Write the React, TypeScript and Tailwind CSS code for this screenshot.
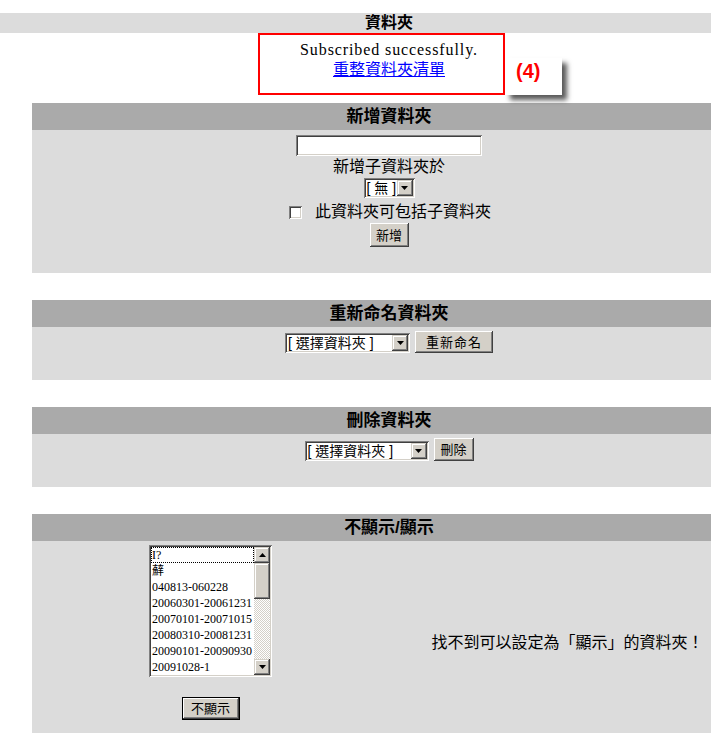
import type { ReactNode } from "react";

const raised =
  "bg-[#d4d0c8] shadow-[inset_-1px_-1px_0_#404040,inset_1px_1px_0_#ffffff,inset_-2px_-2px_0_#808080]";
const sunken =
  "bg-white shadow-[inset_1px_1px_0_#808080,inset_-1px_-1px_0_#ffffff,inset_2px_2px_0_#404040,inset_-2px_-2px_0_#d4d0c8]";
const scrollPart =
  "bg-[#d4d0c8] shadow-[inset_-1px_-1px_0_#404040,inset_1px_1px_0_#d4d0c8,inset_-2px_-2px_0_#808080,inset_2px_2px_0_#ffffff]";

const folders = [
  "I?",
  "蘚",
  "040813-060228",
  "20060301-20061231",
  "20070101-20071015",
  "20080310-20081231",
  "20090101-20090930",
  "20091028-1",
];

function Arrow({ up }: { up?: boolean }) {
  return (
    <svg width="7" height="4" viewBox="0 0 7 4" aria-hidden="true">
      <path d={up ? "M3.5 0 L7 4 L0 4 Z" : "M0 0 L7 0 L3.5 4 Z"} fill="#000" />
    </svg>
  );
}

function ArrowButton({ up }: { up?: boolean }) {
  return (
    <span className={`flex h-[16px] w-[16px] shrink-0 items-center justify-center ${scrollPart}`}>
      <Arrow up={up} />
    </span>
  );
}

function Dropdown({ label, className }: { label: string; className: string }) {
  return (
    <div className={`flex h-[20px] items-center p-[2px] ${sunken} ${className}`}>
      <span className="flex-1 truncate pl-[1px] text-[14px] leading-[16px]">{label}</span>
      <ArrowButton />
    </div>
  );
}

function Button({ children, className }: { children: ReactNode; className: string }) {
  return (
    <button
      type="button"
      className={`flex items-center justify-center text-[13px] leading-none ${raised} ${className}`}
    >
      {children}
    </button>
  );
}

function Section({ title, children, bodyClass }: { title: string; children: ReactNode; bodyClass: string }) {
  return (
    <section>
      <h2 className="flex h-[27px] items-center justify-center bg-[#aaaaaa] text-[17px] font-bold leading-none">
        {title}
      </h2>
      <div className={`bg-[#dcdcdc] ${bodyClass}`}>{children}</div>
    </section>
  );
}

function ListBox() {
  return (
    <div className={`flex h-[132px] w-[123px] p-[2px] ${sunken}`}>
      <ul className="min-w-0 flex-1 overflow-hidden font-['Liberation_Serif','Noto_Sans_CJK_TC',serif] text-[12px]">
        {folders.map((name, i) => (
          <li
            key={name}
            className={`h-[16px] overflow-hidden whitespace-nowrap leading-[14px] ${
              i === 0 ? "border border-dotted border-black" : "border border-transparent"
            }`}
          >
            {name}
          </li>
        ))}
      </ul>
      <div className="flex w-[16px] shrink-0 flex-col">
        <ArrowButton up />
        <span className={`h-[36px] ${scrollPart}`} />
        <span className="flex-1 bg-[repeating-conic-gradient(#d4d0c8_0%_25%,#ffffff_0%_50%)] bg-[length:2px_2px]" />
        <ArrowButton />
      </div>
    </div>
  );
}

export default function App() {
  return (
    <div className="relative h-[733px] w-full overflow-hidden bg-white font-['Liberation_Sans','Noto_Sans_CJK_TC',sans-serif] text-black">
      <div className="w-[778px] pt-[13px]">
        <div className="flex h-[20px] items-center justify-center bg-[#dcdcdc] text-[16px] font-bold leading-none">
          資料夾
        </div>

        <div className="flex h-[70px] flex-col items-center pt-[7px]">
          <p className="h-[20px] font-['Liberation_Serif',serif] text-[16px] leading-[20px] tracking-[0.9px]">
            Subscribed successfully.
          </p>
          <a href="#" className="h-[20px] text-[16px] leading-[20px] text-[#0000ff] underline">
            重整資料夾清單
          </a>
        </div>

        <div className="ml-[32px] flex w-[714px] flex-col gap-[27px]">
          <Section title="新增資料夾" bodyClass="flex h-[143px] flex-col items-center pt-[5px]">
            <div className={`h-[21px] w-[186px] ${sunken}`} />
            <div className="flex h-[22px] items-center text-[16px] leading-none">新增子資料夾於</div>
            <Dropdown label="[ 無 ]" className="w-[51px]" />
            <div className="mt-[3px] flex h-[22px] items-center gap-[13px] pl-[2px] text-[16px] leading-none">
              <span className={`h-[13px] w-[13px] ${sunken}`} />
              <span>此資料夾可包括子資料夾</span>
            </div>
            <Button className="h-[24px] w-[39px]">新增</Button>
          </Section>

          <Section title="重新命名資料夾" bodyClass="flex h-[53px] items-start justify-center pt-[4px]">
            <div className="flex items-end gap-[5px]">
              <Dropdown label="[ 選擇資料夾 ]" className="w-[125px]" />
              <Button className="h-[22px] w-[78px] tracking-[1px]">重新命名</Button>
            </div>
          </Section>

          <Section title="刪除資料夾" bodyClass="flex h-[53px] items-start justify-center pt-[4px]">
            <div className="flex items-end gap-[5px]">
              <Dropdown label="[ 選擇資料夾 ]" className="w-[124px]" />
              <Button className="h-[23px] w-[40px]">刪除</Button>
            </div>
          </Section>

          <Section title="不顯示/顯示" bodyClass="flex h-[200px]">
            <div className="flex w-[357px] flex-col items-center pt-[4px]">
              <ListBox />
              <Button className="mt-[20px] h-[23px] w-[58px] border border-black">不顯示</Button>
            </div>
            <div className="flex w-[357px] justify-center pt-[92px] text-[16px] leading-[20px]">
              找不到可以設定為「顯示」的資料夾！
            </div>
          </Section>
        </div>
      </div>

      <div className="pointer-events-none absolute left-[258px] top-[33px] h-[62px] w-[247px] border-2 border-[#ff0000]" />
      <div className="pointer-events-none absolute left-[505px] top-[58px] flex h-[37px] w-[57px] items-start bg-white pl-[11px] pt-[2px] shadow-[5px_5px_5px_rgba(0,0,0,0.65)]">
        <span className="text-[20px] font-bold leading-[22px] text-[#ff0000]">(4)</span>
      </div>
    </div>
  );
}
